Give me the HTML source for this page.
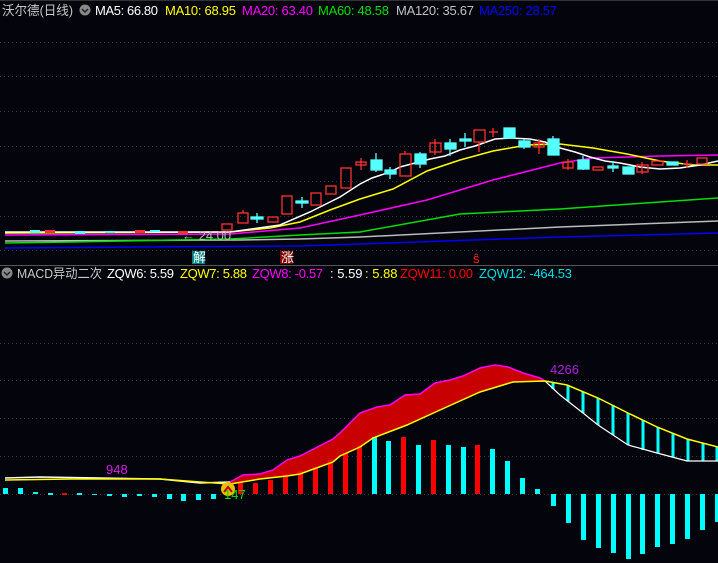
<!DOCTYPE html>
<html><head><meta charset="utf-8"><style>
html,body{margin:0;padding:0;background:#04040c;}
svg{display:block}
text{font-family:"Liberation Sans","Noto Sans CJK SC",sans-serif;font-size:13px}
</style></head><body>
<svg width="718" height="563" viewBox="0 0 718 563" xmlns="http://www.w3.org/2000/svg">
<rect width="718" height="563" fill="#04040c"/>
<g stroke="#3a3a3a" stroke-dasharray="1,3" stroke-width="1">
<line x1="0" y1="42.5" x2="718" y2="42.5"/><line x1="0" y1="76.5" x2="718" y2="76.5"/>
<line x1="0" y1="111.5" x2="718" y2="111.5"/><line x1="0" y1="146.5" x2="718" y2="146.5"/>
<line x1="0" y1="181.5" x2="718" y2="181.5"/><line x1="0" y1="216.5" x2="718" y2="216.5"/>
<line x1="0" y1="250.5" x2="718" y2="250.5"/>
<line x1="0" y1="343.5" x2="718" y2="343.5"/><line x1="0" y1="380.5" x2="718" y2="380.5"/>
<line x1="0" y1="418.5" x2="718" y2="418.5"/><line x1="0" y1="456.5" x2="718" y2="456.5"/>
<line x1="0" y1="494.5" x2="718" y2="494.5"/>
</g>
<line x1="0" y1="265.5" x2="718" y2="265.5" stroke="#555" />
<line x1="0" y1="0.5" x2="718" y2="0.5" stroke="#333" />
<g fill="none" stroke-width="1.5">
<polyline stroke="#0000ff" points="5,248 300,246 360,244 560,237 718,233"/>
<polyline stroke="#bbbbbb" points="5,241 240,240 300,239 360,237 560,227 718,221"/>
<polyline stroke="#00e000" points="5,243 70,242 230,239 300,235 360,232 460,214 560,209 660,202 718,198"/>
<polyline stroke="#ff00ff" points="5,235 230,234 300,228 360,215 427,200 493,180 560,163 593,158 627,157 660,156 718,155"/>
<polyline stroke="#ffff00" points="5,233 230,232 270,228 300,222 330,210 360,199 393,189 427,171 460,160 493,151 527,145 560,144 593,148 627,154 660,161 693,165 718,165"/>
<polyline stroke="#ffffff" points="5,232 230,232 280,225 310,212 340,197 360,184 372,178 390,172 400,167 415,163 430,159 445,156 460,150 475,146 495,139 510,138 530,139 545,142 560,148 575,152 590,157 605,161 620,163 640,167 660,169 680,168 700,165 718,161"/>
</g>
<g fill="#ff3030"><rect x="45" y="230" width="10" height="3"/><rect x="135" y="230" width="10" height="3"/><rect x="178" y="231" width="10" height="3"/></g>
<g fill="#55ffff"><rect x="30" y="230" width="10" height="3"/><rect x="75" y="231" width="10" height="3"/><rect x="105" y="231" width="10" height="2"/><rect x="150" y="230" width="10" height="2"/></g>
<g fill="none" stroke="#ff3030" stroke-width="1.3">
<rect x="222" y="224" width="10" height="6"/>
<rect x="238" y="213" width="10" height="10"/><line x1="243" y1="210" x2="243" y2="213"/>
<rect x="268" y="217" width="10" height="5"/>
<rect x="282" y="196" width="10" height="18"/>
<rect x="311" y="193" width="10" height="12"/>
<rect x="326" y="186" width="10" height="8"/>
<rect x="341" y="168" width="10" height="20"/>
<rect x="356" y="162" width="10" height="3"/><line x1="361" y1="158" x2="361" y2="170"/>
<rect x="400" y="154" width="11" height="22"/><line x1="405" y1="151" x2="405" y2="154"/>
<rect x="430" y="143" width="11" height="9"/><line x1="435" y1="139" x2="435" y2="155"/>
<rect x="474" y="130" width="11" height="12"/><line x1="479" y1="142" x2="479" y2="152"/>
<line x1="489" y1="132" x2="498" y2="132"/><line x1="493" y1="128" x2="493" y2="137"/>
<rect x="534" y="143" width="10" height="4"/><line x1="539" y1="139" x2="539" y2="154"/>
<rect x="563" y="162" width="10" height="6"/><line x1="568" y1="159" x2="568" y2="170"/>
<rect x="593" y="167" width="10" height="3"/>
<rect x="637" y="165" width="11" height="7"/><line x1="642" y1="162" x2="642" y2="174"/>
<rect x="652" y="161" width="11" height="4"/>
<line x1="683" y1="164" x2="692" y2="164"/><line x1="687" y1="160" x2="687" y2="168"/>
<rect x="697" y="158" width="10" height="6"/>
</g>
<g fill="#55ffff" stroke="#55ffff" stroke-width="1.3">
<line x1="257" y1="213" x2="257" y2="223"/><rect x="251" y="217" width="12" height="2"/>
<line x1="302" y1="197" x2="302" y2="208"/><rect x="296" y="201" width="12" height="2"/>
<line x1="376" y1="153" x2="376" y2="172"/><rect x="371" y="160" width="11" height="10"/>
<line x1="390" y1="167" x2="390" y2="179"/><rect x="385" y="170" width="11" height="4"/>
<line x1="420" y1="152" x2="420" y2="168"/><rect x="415" y="154" width="11" height="10"/>
<line x1="450" y1="139" x2="450" y2="156"/><rect x="445" y="143" width="11" height="6"/>
<line x1="465" y1="133" x2="465" y2="147"/><rect x="460" y="139" width="11" height="2"/>
<rect x="504" y="128" width="11" height="10"/>
<line x1="524" y1="139" x2="524" y2="149"/><rect x="519" y="141" width="11" height="6"/>
<line x1="553" y1="136" x2="553" y2="155"/><rect x="548" y="139" width="11" height="16"/>
<line x1="583" y1="156" x2="583" y2="170"/><rect x="578" y="160" width="11" height="9"/>
<line x1="613" y1="161" x2="613" y2="172"/><rect x="608" y="166" width="10" height="2"/>
<rect x="623" y="167" width="11" height="7"/>
<rect x="667" y="162" width="11" height="3"/>
</g>
<text x="182" y="240" fill="#b8b8b8" font-size="12">← 24.00</text>
<rect x="192" y="251" width="13" height="13" fill="#008080"/><text x="193" y="262" fill="#fff" font-size="11">解</text>
<rect x="280" y="251" width="13" height="13" fill="#800000"/><text x="281" y="262" fill="#fff" font-size="11">涨</text>
<text x="473" y="263" fill="#ff2020" font-size="11">ŝ</text>
<text x="2" y="15" fill="#c8c8c8" textLength="71" lengthAdjust="spacingAndGlyphs">沃尔德(日线)</text>
<circle cx="85" cy="10" r="5.5" fill="#888"/><path d="M82 9 L85 12 L88 9" stroke="#222" fill="none" stroke-width="1.5"/>
<text x="95" y="15" fill="#ffffff" textLength="63">MA5: 66.80</text>
<text x="165" y="15" fill="#ffff00" textLength="71">MA10: 68.95</text>
<text x="242" y="15" fill="#ff00ff" textLength="71">MA20: 63.40</text>
<text x="318" y="15" fill="#00e000" textLength="71">MA60: 48.58</text>
<text x="396" y="15" fill="#c0c0c0" textLength="78">MA120: 35.67</text>
<text x="479" y="15" fill="#0000ff" textLength="78">MA250: 28.57</text>
<circle cx="7" cy="273" r="5.5" fill="#888"/><path d="M4 272 L7 275 L10 272" stroke="#222" fill="none" stroke-width="1.5"/>
<text x="17" y="278" fill="#c8c8c8" textLength="85" lengthAdjust="spacingAndGlyphs">MACD异动二次</text>
<text x="107" y="278" fill="#ffffff" textLength="67">ZQW6: 5.59</text>
<text x="180" y="278" fill="#ffff00" textLength="67">ZQW7: 5.88</text>
<text x="252" y="278" fill="#ff00ff" textLength="71">ZQW8: -0.57</text>
<text x="330" y="278" fill="#ffffff">: 5.59</text>
<text x="365" y="278" fill="#ffff00">: 5.88</text>
<text x="400" y="278" fill="#ff0000" textLength="73">ZQW11: 0.00</text>
<text x="479" y="278" fill="#00e0e0" textLength="93">ZQW12: -464.53</text>
<polygon fill="#c80000" points="230,482 243,475 260,474 273,470 287,460 300,456 333,439 340,433 360,413 377,407 390,405 405,395 420,394 435,383 450,380 463,376 480,368 495,365 508,367 523,373 540,378 545,381 513,382 480,392 440,410 407,425 373,438 360,447 340,456 333,462 300,474 287,476 260,479 230,484"/>
<g fill="#ff0000">
<rect x="62" y="493" width="5" height="2"/>
<rect x="238" y="483" width="5" height="11"/><rect x="253" y="483" width="5" height="11"/>
<rect x="268" y="480" width="5" height="14"/><rect x="283" y="474" width="5" height="20"/>
<rect x="298" y="471" width="5" height="23"/><rect x="313" y="467" width="5" height="27"/>
<rect x="328" y="460" width="5" height="34"/><rect x="343" y="453" width="5" height="41"/>
<rect x="357" y="445" width="5" height="49"/><rect x="401" y="437" width="5" height="57"/>
<rect x="431" y="440" width="5" height="54"/><rect x="475" y="445" width="5" height="49"/>
</g>
<g fill="#00ffff">
<rect x="3" y="488" width="5" height="6"/><rect x="18" y="488" width="5" height="6"/>
<rect x="33" y="492" width="5" height="2"/><rect x="48" y="493" width="5" height="2"/>
<rect x="77" y="493" width="5" height="2"/><rect x="92" y="494" width="5" height="1"/>
<rect x="107" y="494" width="5" height="2"/><rect x="122" y="494" width="5" height="3"/>
<rect x="137" y="494" width="5" height="2"/><rect x="152" y="494" width="5" height="3"/>
<rect x="167" y="494" width="5" height="5"/><rect x="181" y="494" width="5" height="7"/>
<rect x="196" y="494" width="5" height="6"/><rect x="211" y="494" width="5" height="5"/>
<rect x="372" y="437" width="5" height="57"/><rect x="386" y="441" width="5" height="53"/>
<rect x="416" y="445" width="5" height="49"/><rect x="446" y="445" width="5" height="49"/>
<rect x="461" y="447" width="5" height="47"/><rect x="490" y="449" width="5" height="45"/>
<rect x="505" y="461" width="5" height="33"/><rect x="520" y="478" width="5" height="16"/>
<rect x="535" y="489" width="5" height="5"/>
<rect x="551" y="494" width="5" height="12"/><rect x="566" y="494" width="5" height="29"/>
<rect x="581" y="494" width="5" height="46"/><rect x="596" y="494" width="5" height="54"/>
<rect x="611" y="494" width="5" height="59"/><rect x="626" y="494" width="5" height="65"/>
<rect x="640" y="494" width="5" height="60"/><rect x="655" y="494" width="5" height="53"/>
<rect x="670" y="494" width="5" height="50"/><rect x="685" y="494" width="5" height="45"/>
<rect x="700" y="494" width="5" height="36"/><rect x="715" y="494" width="5" height="28"/>
</g>
<g stroke="#00ffff" stroke-width="3">
<line x1="553" y1="383" x2="553" y2="389"/><line x1="568" y1="386" x2="568" y2="401"/>
<line x1="583" y1="392" x2="583" y2="413"/><line x1="598" y1="398" x2="598" y2="425"/>
<line x1="613" y1="405" x2="613" y2="435"/><line x1="628" y1="413" x2="628" y2="445"/>
<line x1="643" y1="420" x2="643" y2="450"/><line x1="658" y1="427" x2="658" y2="453"/>
<line x1="673" y1="433" x2="673" y2="457"/><line x1="688" y1="439" x2="688" y2="461"/>
<line x1="703" y1="443" x2="703" y2="461"/><line x1="717" y1="447" x2="717" y2="461"/>
</g>
<polyline fill="none" stroke="#ffffff" stroke-width="1.5" points="5,478 40,477 100,478 160,479 180,481 200,483 230,482"/>
<polyline fill="none" stroke="#ff00ff" stroke-width="1.5" points="230,482 243,475 260,474 273,470 287,460 300,456 333,439 340,433 360,413 377,407 390,405 405,395 420,394 435,383 450,380 463,376 480,368 495,365 508,367 523,373 540,378 545,381"/>
<polyline fill="none" stroke="#ffffff" stroke-width="1.2" points="545,381 560,395 583,413 598,425 628,445 657,453 687,461 718,461"/>
<polyline fill="none" stroke="#ffff00" stroke-width="1.5" points="5,480 70,479 160,479 200,482 230,484 260,479 287,476 300,474 333,462 340,456 360,447 373,438 407,425 440,410 480,392 513,382 545,381 567,385 598,398 628,413 657,427 687,439 718,447"/>
<text x="106" y="474" fill="#d020e0" font-size="13">948</text>
<text x="550" y="374" fill="#b020e0" font-size="13">4266</text>
<circle cx="228" cy="489" r="7" fill="#e8c000"/><path d="M224 492 L228 487 L232 492" stroke="#c00000" stroke-width="2" fill="none"/>
<text x="224" y="499" fill="#00e000" font-size="12">147</text>
</svg>
</body></html>
